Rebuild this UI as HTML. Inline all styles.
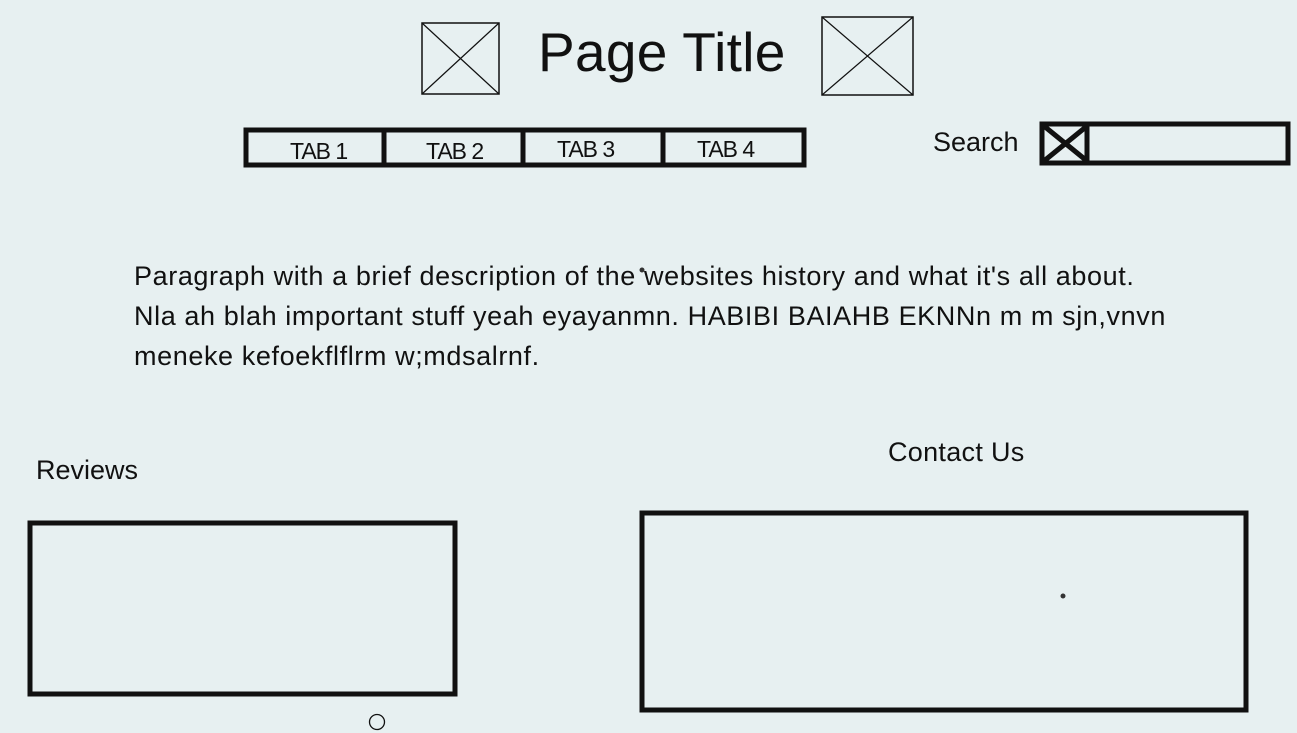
<!DOCTYPE html>
<html><head><meta charset="utf-8"><style>
body{margin:0;width:1297px;height:733px;background:#e7f0f1;position:relative;overflow:hidden;font-family:"Liberation Sans",sans-serif;color:#111}
.t{position:absolute;white-space:nowrap}
svg{position:absolute;left:0;top:0}
</style></head><body>
<svg width="1297" height="733" fill="none" stroke="#111">
<rect x="422" y="23" width="77" height="71" stroke-width="1.5"/><path d="M422 23L499 94M499 23L422 94" stroke-width="1.2"/>
<rect x="822" y="17" width="91" height="78" stroke-width="1.5"/><path d="M822 17L913 95M913 17L822 95" stroke-width="1.2"/>
<rect x="246" y="130" width="558" height="35" stroke-width="5"/>
<path d="M384 130V166M523 130V167M663 130V165" stroke-width="5"/>
<rect x="1042" y="124" width="246" height="39" stroke-width="5"/>
<path d="M1087 124V163M1044 126L1087 161M1087 126L1044 161" stroke-width="5"/>
<rect x="30" y="523" width="425" height="171" stroke-width="5"/>
<rect x="642" y="513" width="604" height="197" stroke-width="5"/>
<circle cx="377" cy="722" r="7.5" stroke-width="1.3"/>
<circle cx="1063" cy="596" r="2.5" fill="#333" stroke="none"/>
<circle cx="642" cy="270" r="2.5" fill="#333" stroke="none"/>
</svg>
<div class="t" style="left:538px;top:20px;font-size:55px;letter-spacing:0.3px">Page Title</div>
<div class="t" style="left:290px;top:138px;font-size:23px;letter-spacing:-1px">TAB 1</div>
<div class="t" style="left:426px;top:138px;font-size:23px;letter-spacing:-1px">TAB 2</div>
<div class="t" style="left:557px;top:136px;font-size:23px;letter-spacing:-1px">TAB 3</div>
<div class="t" style="left:697px;top:136px;font-size:23px;letter-spacing:-1px">TAB 4</div>
<div class="t" style="left:933px;top:127px;font-size:27px">Search</div>
<div class="t" style="left:134px;top:256px;font-size:27px;line-height:40px;letter-spacing:0.6px">Paragraph with a brief description of the websites history and what it's all about.<br>Nla ah blah important stuff yeah eyayanmn. HABIBI BAIAHB EKNNn m m sjn,vnvn<br>meneke kefoekflflrm w;mdsalrnf.</div>
<div class="t" style="left:36px;top:455px;font-size:27px">Reviews</div>
<div class="t" style="left:888px;top:437px;font-size:27px;letter-spacing:0.3px">Contact Us</div>
</body></html>
